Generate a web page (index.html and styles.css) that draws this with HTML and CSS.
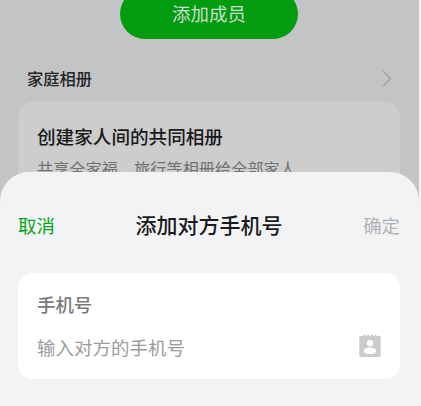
FILE: index.html
```html
<!DOCTYPE html>
<html lang="zh-CN">
<head>
<meta charset="utf-8">
<title>添加对方手机号</title>
<link rel="stylesheet" href="styles.css">
</head>
<body>
<div class="screen">
  <main class="page">
    <button class="add-member">添加成员</button>
    <div class="section-head">
      <span>家庭相册</span>
      <svg class="chevron" viewBox="0 0 10 17"><path d="M1 1l7.500 7.500L1 16"/></svg>
    </div>
    <section class="album">
      <h2>创建家人间的共同相册</h2>
      <p>共享全家福、旅行等相册给全部家人</p>
    </section>
  </main>
  <section class="sheet">
    <header class="sheet-head">
      <span class="cancel">取消</span>
      <h1>添加对方手机号</h1>
      <span class="confirm">确定</span>
    </header>
    <div class="field">
      <div class="label">手机号</div>
      <div class="input-row">
        <span class="placeholder">输入对方的手机号</span>
        <svg class="contact" viewBox="0 0 22 24">
          <path class="book" d="M1.500 2H4.200a1.300 1.300 0 0 1 2.600 0H7.700a1.300 1.300 0 0 1 2.600 0h1.400a1.300 1.300 0 0 1 2.600 0h.9a1.300 1.300 0 0 1 2.600 0h2.700a1.200 1.200 0 0 1 1.200 1.200v18.600a1.200 1.200 0 0 1-1.200 1.200h-19A1.200 1.200 0 0 1 .3 21.800V3.200A1.200 1.200 0 0 1 1.500 2z"/>
          <circle class="person" cx="11" cy="9.300" r="3.200"/>
          <path class="person" d="M4.700 17c0-2.300 2.800-3.600 6.300-3.600s6.300 1.300 6.300 3.600c0 2-2.100 2.900-6.300 2.900s-6.300-.9-6.300-2.900z"/>
        </svg>
      </div>
    </div>
  </section>
</div>
</body>
</html>
```
FILE: styles.css
```css
* { box-sizing: border-box; margin: 0; padding: 0; }

body {
  width: 421px;
  height: 406px;
  overflow: hidden;
  background: #f3f3f4;
  font-family: "Noto Sans CJK SC", sans-serif;
}

.screen {
  position: relative;
  width: 419px;
  height: 406px;
  overflow: hidden;
  background: #c3c4c6;
}

.page {
  display: flex;
  flex-direction: column;
  padding: 0 19px 0 18px;
}

.add-member {
  align-self: center;
  width: 178px;
  height: 50px;
  margin-top: -11px;
  padding-bottom: 2px;
  border: 0;
  border-radius: 25px;
  background: #039b0f;
  color: #cdddcd;
  font: 400 18.5px/48px "Noto Sans CJK SC", sans-serif;
}

.section-head {
  display: flex;
  justify-content: space-between;
  align-items: center;
  height: 24px;
  margin: 27px 8px 0 9px;
  color: #242526;
  font-size: 16.3px;
  font-weight: 500;
}

.chevron {
  width: 10px;
  height: 17px;
  fill: none;
  stroke: #a1a2a3;
  stroke-width: 1.5;
}

.album {
  height: 120px;
  margin-top: 12px;
  padding: 20px 19px;
  border-radius: 15px;
  background: #cdcdcd;
}

.album h2 {
  color: #191919;
  font-size: 18.6px;
  font-weight: 500;
  line-height: 28px;
  white-space: nowrap;
}

.album p {
  margin-top: 6px;
  color: #717171;
  font-size: 16.2px;
  line-height: 24px;
  white-space: nowrap;
}

.sheet {
  position: absolute;
  top: 172px;
  left: 0;
  right: 0;
  bottom: 0;
  padding: 35px 19px 0 18px;
  border-radius: 29px 29px 0 0;
  background: #f2f3f5;
}

.sheet-head {
  display: flex;
  justify-content: space-between;
  align-items: center;
  height: 36px;
  font-size: 18.4px;
}

.sheet-head h1 {
  margin-top: -2px;
  color: #1a1b1c;
  font-size: 21px;
  font-weight: 500;
}

.cancel { color: #08a516; }
.confirm { color: #b0b1b3; }

.field {
  height: 106px;
  margin-top: 30px;
  padding: 17px 19px 0;
  border-radius: 15px;
  background: #fff;
}

.label {
  color: #7b7b7b;
  font-size: 18.4px;
  font-weight: 500;
  line-height: 28px;
}

.input-row {
  display: flex;
  justify-content: space-between;
  align-items: center;
  height: 28px;
  margin-top: 15px;
}

.placeholder {
  color: #9c9c9c;
  font-size: 18.5px;
}

.contact {
  width: 22px;
  height: 24px;
  margin-top: -2px;
}

.book { fill: #cbcbcb; }
.person { fill: #fff; }
```
